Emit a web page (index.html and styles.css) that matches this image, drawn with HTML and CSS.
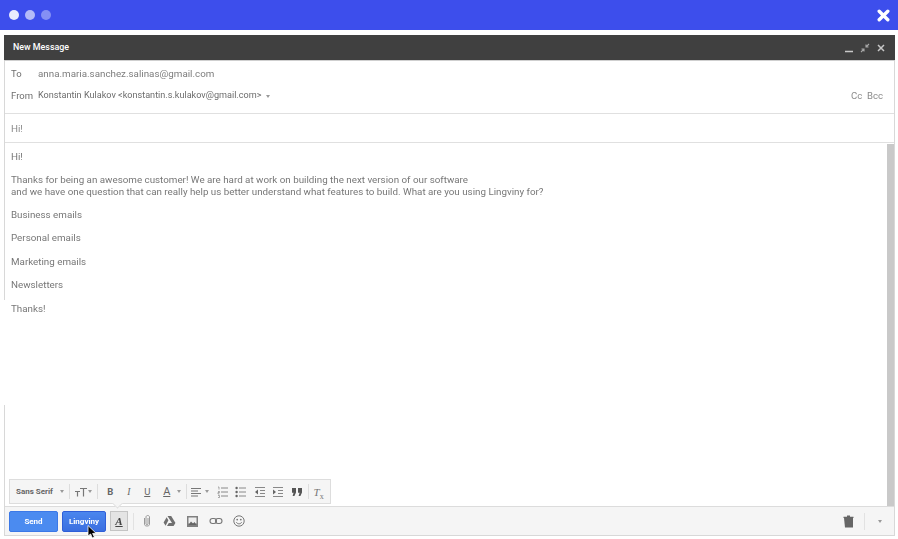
FILE: index.html
```html
<!DOCTYPE html>
<html lang="en">
<head>
<meta charset="utf-8">
<title>New Message</title>
<link rel="stylesheet" href="styles.css">
</head>
<body>
<header class="topbar">
  <div class="dots"><span class="dot d1"></span><span class="dot d2"></span><span class="dot d3"></span></div>
  <svg class="big-x" width="13" height="13" viewBox="0 0 13 13"><path d="M2.2 2.2L10.8 10.8M10.8 2.2L2.2 10.8" stroke="#fff" stroke-width="3.4" stroke-linecap="round"/></svg>
</header>
<main class="compose">
  <div class="titlebar">
    <span class="title">New Message</span>
    <div class="win-icons">
      <svg width="10" height="10" viewBox="0 0 10 10"><path d="M1 8.5H9" stroke="#c8c8c8" stroke-width="1.5"/></svg>
      <svg width="10" height="10" viewBox="0 0 10 10"><path d="M6 4L9 1M6 1.5V4H8.5M4 6L1 9M1.5 6H4V8.5" stroke="#a8a8a8" stroke-width="1.1" fill="none"/></svg>
      <svg width="10" height="10" viewBox="0 0 10 10"><path d="M2 2L8 8M8 2L2 8" stroke="#c8c8c8" stroke-width="1.5"/></svg>
    </div>
  </div>
  <section class="recipients">
    <div class="row to"><span class="label">To</span><span class="addr">anna.maria.sanchez.salinas@gmail.com</span></div>
    <div class="row from"><span class="label">From</span><span class="sender">Konstantin Kulakov &lt;konstantin.s.kulakov@gmail.com&gt;</span><span class="caret small-caret"></span><span class="cc">Cc&nbsp; Bcc</span></div>
  </section>
  <div class="subject">Hi!</div>
  <section class="body">
    <div class="message">
      <p>Hi!</p>
      <p>Thanks for being an awesome customer! We are hard at work on building the next version of our software<br>and we have one question that can really help us better understand what features to build. What are you using Lingviny for?</p>
      <p>Business emails</p>
      <p>Personal emails</p>
      <p>Marketing emails</p>
      <p>Newsletters</p>
      <p>Thanks!</p>
    </div>
    <div class="format-bar">
      <span class="font-name">Sans Serif</span><span class="caret"></span><span class="sep s1"></span>
      <svg class="fi tt" width="14" height="12" viewBox="0 0 14 12"><path d="M6 2.5H13M9.5 2.5V10.5M1 5.5H6M3.5 5.5V10.5" stroke="#777" stroke-width="1.2" fill="none"/></svg><span class="caret"></span><span class="sep s2"></span>
      <b class="fmt bold">B</b>
      <i class="fmt ital">I</i>
      <u class="fmt und">U</u>
      <span class="fmt color">A</span><span class="caret"></span><span class="sep tight"></span>
      <svg class="fi first" width="12" height="12" viewBox="0 0 12 12"><path d="M1 2.5H11M1 5H8M1 7.5H11M1 10H8" stroke="#777" stroke-width="1.2"/></svg><span class="caret"></span>
      <svg class="fi list" width="12" height="12" viewBox="0 0 12 12"><path d="M4 2H11M4 6H11M4 10H11" stroke="#888" stroke-width="1"/><path d="M1 1H2V3.5M1 5.5H2.5V6.5H1V8H2.5M1 9.5H2.5V11.5H1" stroke="#777" stroke-width=".6" fill="none"/></svg>
      <svg class="fi" width="12" height="12" viewBox="0 0 12 12"><path d="M4 2H11M4 6H11M4 10H11" stroke="#888" stroke-width="1"/><circle cx="1.6" cy="2" r="1.2" fill="#666"/><circle cx="1.6" cy="6" r="1.2" fill="#666"/><circle cx="1.6" cy="10" r="1.2" fill="#666"/></svg>
      <svg class="fi" width="12" height="12" viewBox="0 0 12 12"><path d="M1 1.5H11M6 4.5H11M6 7.5H11M1 10.5H11" stroke="#888" stroke-width="1"/><path d="M4 3.5V8.5L1 6Z" fill="#666"/></svg>
      <svg class="fi" width="12" height="12" viewBox="0 0 12 12"><path d="M1 1.5H11M6 4.5H11M6 7.5H11M1 10.5H11" stroke="#888" stroke-width="1"/><path d="M1 3.5V8.5L4 6Z" fill="#666"/></svg>
      <svg class="fi quote" width="12" height="12" viewBox="0 0 12 12"><path d="M1 2H5V6.5L3.4 10H1.6L2.6 6.8H1ZM7 2H11V6.5L9.4 10H7.6L8.6 6.8H7Z" fill="#555"/></svg><span class="sep"></span>
      <span class="clear"><i>T</i><sub>x</sub></span>
      <span class="notch"></span>
    </div>
    <div class="scrollbar"></div>
  </section>
  <footer class="actions">
    <button class="btn">Send</button>
    <button class="btn">Lingviny</button>
    <span class="format-toggle">A</span>
    <span class="divider"></span>
    <svg class="ai" width="12" height="14" viewBox="0 0 12 14"><path d="M3.5 4V10.5C3.5 12.5 8.5 12.5 8.5 10.5V3C8.5 1 5 1 5 3V10C5 11 7 11 7 10V4" stroke="#999" fill="none"/></svg>
    <svg class="ai" width="13" height="12" viewBox="0 0 13 12"><path d="M4.5 1H8.2L12.5 8H9ZM3.6 2.2L5.4 5.2L2.6 10.8L.6 7.6ZM4 11L5.8 8H12.4L10.6 11Z" fill="#707070"/></svg>
    <svg class="ai" width="13" height="13" viewBox="0 0 13 13"><path d="M1 1H12V12H1Z" fill="#808080"/><path d="M2.5 2.5H10.5V8.5H2.5Z" fill="#eee"/><path d="M2.5 10L5 6.5L7 8.5L8.5 7L10.5 10Z" fill="#666"/></svg>
    <svg class="ai" width="14" height="8" viewBox="0 0 14 8"><rect x="1" y="1.5" width="6.5" height="5" rx="2.5" stroke="#777" stroke-width="1.1" fill="none"/><rect x="6.5" y="1.5" width="6.5" height="5" rx="2.5" stroke="#777" stroke-width="1.1" fill="none"/></svg>
    <svg class="ai" width="12" height="12" viewBox="0 0 12 12"><circle cx="6" cy="6" r="5.2" stroke="#777" fill="none"/><circle cx="4.2" cy="4.6" r=".9" fill="#777"/><circle cx="7.8" cy="4.6" r=".9" fill="#777"/><path d="M3.4 7.2C4.4 9.4 7.6 9.4 8.6 7.2" stroke="#777" fill="none"/></svg>
    <svg class="trash" width="11" height="13" viewBox="0 0 11 13"><path d="M1 3H10V12.5H2Z" fill="#666"/><path d="M.5 1.8H10.5V3H.5ZM4 .5H7V2H4Z" fill="#666"/></svg>
    <span class="divider end"></span>
    <span class="caret last"></span>
  </footer>
  <span class="mask"></span>
</main>
<svg class="cursor" width="11" height="14" viewBox="0 0 11 14"><path d="M1 0.5V11L3.6 9L5.4 13L7.4 12L5.6 8.5L9 8.2Z" fill="#000" stroke="#fff" stroke-width=".8"/></svg>
</body>
</html>
```
FILE: styles.css
```css
* { box-sizing: border-box; }
html, body { margin: 0; height: 100%; overflow: hidden; }
body {
  position: relative;
  width: 898px;
  height: 539px;
  background: #fff;
  font-family: Roboto, "Liberation Sans", sans-serif;
  color: #777;
  font-size: 9.8px;
  display: flex;
  flex-direction: column;
}
.topbar {
  height: 30px;
  flex: none;
  background: #3d4eec;
  display: flex;
  align-items: center;
  justify-content: space-between;
  padding: 0 9px;
  filter: blur(.4px);
}
.dots { display: flex; gap: 6px; }
.dot { width: 10px; height: 10px; border-radius: 50%; }
.d1 { background: #e9ebfd; }
.d2 { background: #b4bbf8; }
.d3 { background: #8490f4; }
.compose {
  position: relative;
  margin: 5px 4px 0;
  width: 891px;
  height: 501px;
  flex: none;
  display: flex;
  flex-direction: column;
  border-left: 1px solid #d8d8d8;
  border-right: 1px solid #d8d8d8;
  border-bottom: 1px solid #d8d8d8;
  filter: blur(.4px);
}
.titlebar {
  height: 26px;
  margin: 0 -1px;
  flex: none;
  background: #404040;
  border-bottom: 1px solid #cfcfcf;
  color: #fff;
  display: flex;
  align-items: center;
  justify-content: space-between;
  padding: 0 8px 1px 9px;
}
.title { font-size: 8.9px; font-weight: 500; }
.win-icons { display: flex; gap: 6px; margin-top: 2px; margin-right: 1px; }
.recipients {
  height: 53px;
  flex: none;
  border-bottom: 1px solid #e0e0e0;
  padding: 0 6px;
}
.row { display: flex; align-items: center; }
.to { height: 25px; }
.from { height: 18px; margin-top: 0; font-size: 9.1px; }
.label { width: 27px; flex: none; font-size: 9.5px; color: #6f6f6f; }
.addr { color: #7d7d7d; font-size: 9.8px; }
.sender { color: #6c6c6c; }
.cc { margin-left: auto; font-size: 9.6px; color: #8a8a8a; margin-right: 5px; }
.subject {
  height: 29px;
  flex: none;
  border-bottom: 1px solid #e0e0e0;
  padding-left: 6px;
  display: flex;
  align-items: center;
  color: #8a8a8a;
}
.body {
  position: relative;
  flex: 1;
  min-height: 0;
  padding: 7.5px 6px 0;
  border-bottom: 1px solid #dcdcdc;
}
.message { color: #777; font-size: 9.8px; line-height: 11.7px; }
.message p { margin: 0 0 11.7px; }
.scrollbar {
  position: absolute;
  right: 0;
  top: 1px;
  bottom: 0;
  width: 7px;
  background: #c9c9c9;
}
.format-bar {
  position: absolute;
  left: 4px;
  top: 336px;
  width: 322px;
  height: 25px;
  background: #f5f5f5;
  border: 1px solid #ddd;
  display: flex;
  align-items: center;
  padding-left: 6px;
  color: #666;
  white-space: nowrap;
}
.font-name { font-size: 8px; font-weight: 700; color: #666; width: 44px; flex: none; }
.caret {
  display: inline-block;
  flex: none;
  width: 0;
  height: 0;
  border-left: 2.5px solid transparent;
  border-right: 2.5px solid transparent;
  border-top: 3px solid #999;
}
.caret.small-caret { margin-left: 5px; margin-top: 2px; }
.sep { width: 1px; height: 15px; background: #ddd; margin: 0 5px; flex: none; }
.sep.s1 { margin-right: 4px; }
.sep.s2 { margin-right: 3px; }
.sep.tight { margin-right: 1px; }
.fi { flex: none; margin: 0 6.5px 0 0; }
.fi.tt { margin: 0; }
.fi.first { margin: 0 3px 0 1.5px; }
.fi.list { margin-left: 8px; }
.fi.quote { margin-right: 0; }
.fmt { width: 18.5px; text-align: center; font-size: 9.5px; color: #666; font-family: "Liberation Serif", serif; flex: none; }
.bold, .und, .color { font-family: Roboto, sans-serif; }
.color { font-size: 11px; text-decoration: underline; margin: 0 1px; }
.clear { font-family: "Liberation Serif", serif; color: #777; font-size: 11px; }
.clear sub { font-size: 8px; line-height: 0; }
.notch {
  position: absolute;
  left: 103px;
  top: 19px;
  width: 9px;
  height: 9px;
  background: #f5f5f5;
  border-right: 1px solid #ddd;
  border-bottom: 1px solid #ddd;
  transform: rotate(45deg) scale(.8);
}
.actions {
  height: 28px;
  flex: none;
  background: #f5f5f5;
  display: flex;
  align-items: center;
  padding: 0 0 0 4px;
}
.btn {
  height: 21px;
  border: 1px solid #3b78e7;
  border-radius: 2px;
  background: #4b8bf0;
  color: #fff;
  font: 700 8px Roboto, sans-serif;
  padding: 0;
  width: 49px;
  margin-right: 4px;
}
.btn + .btn { width: 44px; background: linear-gradient(#4b86ee, #3a6ee0); border-color: #2f5fd8; margin-right: 4px; }
.format-toggle {
  width: 18px;
  height: 20px;
  background: #e4e4e4;
  border: 1px solid #c4c4c4;
  font: italic 700 11px "Liberation Serif", serif;
  color: #444;
  text-align: center;
  line-height: 18px;
  text-decoration: underline;
}
.divider { width: 1px; height: 17px; background: #e2e2e2; margin: 0 7px 0 5px; flex: none; }
.ai { flex: none; }
.actions .ai + .ai { margin-left: 10px; }
.trash { margin-left: auto; }
.divider.end { margin: 0 13px 0 10px; }
.caret.last { margin: 0 12px 0 0; }
.mask {
  position: absolute;
  left: -1px;
  top: 265px;
  width: 1px;
  height: 105px;
  background: #fff;
}
.cursor { position: absolute; left: 87px; top: 525px; }
.big-x { flex: none; margin-right: -1px; }
```
